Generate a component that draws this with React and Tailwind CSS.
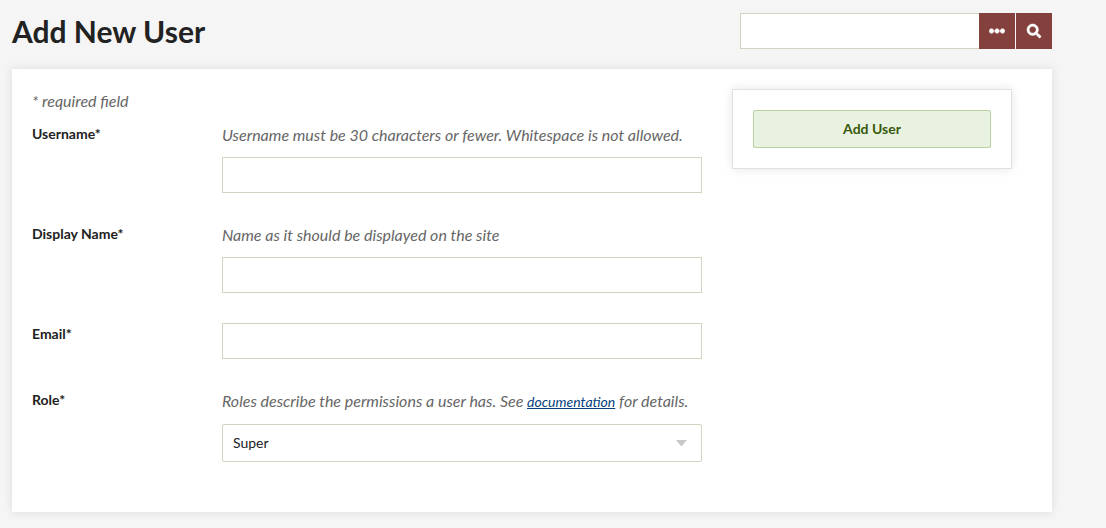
import { FaEllipsisH, FaSearch } from 'react-icons/fa';

const inputClass =
  'block h-9 w-full border border-[#d4d3bf] bg-white px-2 text-sm outline-none';

function Field({ id, label, hint, children }) {
  return (
    <div className="flex">
      <label htmlFor={id} className="w-[190px] shrink-0 text-sm leading-[22px] font-bold">
        {label}*
      </label>
      <div className="min-w-0 flex-1">
        {hint && <p className="mb-2.5 text-base leading-6 text-[#666666] italic">{hint}</p>}
        {children}
      </div>
    </div>
  );
}

export default function App() {
  return (
    <div className="min-h-screen bg-[#f5f5f5] pr-[54px] pb-4 pl-3 font-['Lato',sans-serif] text-[#222222]">
      <header className="flex items-start justify-between pt-[13px] pb-5">
        <h1 className="text-[30px] leading-9 font-bold">Add New User</h1>
        <form className="flex" onSubmit={(e) => e.preventDefault()}>
          <input
            type="text"
            aria-label="Query"
            className="h-9 w-[239px] border border-r-0 border-[#d4d3bf] bg-white px-2 text-sm outline-none"
          />
          <button
            type="button"
            aria-label="Advanced options"
            className="flex size-9 items-center justify-center bg-[#84403c] text-white"
          >
            <FaEllipsisH size={16} strokeWidth={20} />
          </button>
          <button
            type="submit"
            aria-label="Search"
            className="ml-px flex size-9 items-center justify-center bg-[#84403c] text-white"
          >
            <FaSearch size={14} strokeWidth={20} className="overflow-visible" />
          </button>
        </form>
      </header>

      <main className="bg-white px-5 pt-5 pb-[50px] shadow-[0_0_10px_rgba(0,0,0,0.1)]">
        <form className="flex items-start gap-[30px] pr-5" onSubmit={(e) => e.preventDefault()}>
          <section className="min-w-0 flex-1">
            <p className="mb-2.5 text-base leading-6 text-[#666666] italic">* required field</p>
            <div className="flex flex-col gap-[30px]">
              <Field
                id="username"
                label="Username"
                hint="Username must be 30 characters or fewer. Whitespace is not allowed."
              >
                <input id="username" type="text" className={inputClass} />
              </Field>
              <Field id="name" label="Display Name" hint="Name as it should be displayed on the site">
                <input id="name" type="text" className={inputClass} />
              </Field>
              <Field id="email" label="Email">
                <input id="email" type="email" className={inputClass} />
              </Field>
              <Field
                id="role"
                label="Role"
                hint={
                  <>
                    Roles describe the permissions a user has. See{' '}
                    <a href="#documentation" className="text-[14px] text-[#05427d] underline">
                      documentation
                    </a>{' '}
                    for details.
                  </>
                }
              >
                <div className="relative">
                  <select
                    id="role"
                    className="block h-[38px] w-full appearance-none rounded-xs border border-[#d4d3bf] bg-white px-2.5 text-sm outline-none"
                  >
                    <option>Super</option>
                    <option>Admin</option>
                    <option>Researcher</option>
                    <option>Contributor</option>
                  </select>
                  <svg
                    className="pointer-events-none absolute top-4 right-[15px]"
                    width="11"
                    height="6"
                    viewBox="0 0 11 6"
                    aria-hidden="true"
                  >
                    <path d="M0 0h11L6 6H5z" fill="#c8c8c8" />
                  </svg>
                </div>
              </Field>
            </div>
          </section>

          <aside className="w-[280px] shrink-0 border border-[#e2e2dc] p-5 shadow-[0_0_10px_rgba(0,0,0,0.1)]">
            <button
              type="submit"
              className="block h-[38px] w-full rounded-xs border border-[#b9d3a0] bg-[#e9f2e1] text-sm font-bold text-[#38590b]"
            >
              Add User
            </button>
          </aside>
        </form>
      </main>
    </div>
  );
}
